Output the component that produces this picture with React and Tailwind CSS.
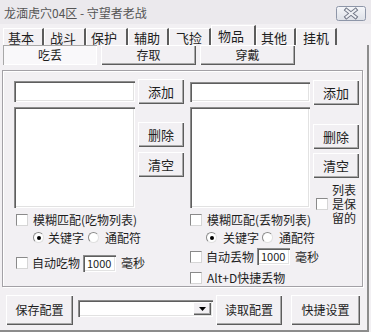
import React from "react";

const raised =
  "bg-[#f2f0f3] shadow-[inset_1px_1px_0_#ffffff,inset_-1px_-1px_0_#5c5c5c,inset_-2px_-2px_0_#a9a9a9]";
const sunken =
  "bg-white shadow-[inset_1px_1px_0_#8c8c8c,inset_2px_2px_0_#5e5e5e,inset_-1px_-1px_0_#ffffff,inset_-2px_-2px_0_#e2e2e2]";

function CloseBtn() {
  return (
    <svg width="30" height="15" viewBox="0 0 30 15" className="self-start mt-[6px]">
      <defs>
        <linearGradient id="cg" x1="0" y1="0" x2="0" y2="1">
          <stop offset="0" stopColor="#f6f7fa" />
          <stop offset="1" stopColor="#dde0e7" />
        </linearGradient>
      </defs>
      <rect x="0.5" y="0.5" width="29" height="14" rx="2" fill="url(#cg)" stroke="#8e96a8" />
      <path d="M10.5 4 L19.5 11 M19.5 4 L10.5 11" stroke="#6f7585" strokeWidth="4" strokeLinecap="square" />
      <path d="M10.5 4 L19.5 11 M19.5 4 L10.5 11" stroke="#eef0f4" strokeWidth="2" strokeLinecap="square" />
    </svg>
  );
}

function Check() {
  return (
    <div className="w-[12px] h-[12px] shrink-0 bg-white border border-t-[#8a8a8a] border-l-[#8a8a8a] border-r-[#d6d6d6] border-b-[#d6d6d6]" />
  );
}

function Radio({ on }) {
  return (
    <div className="w-[11px] h-[11px] shrink-0 rounded-full bg-white border border-t-[#8a8a8a] border-l-[#8a8a8a] border-r-[#e0e0e0] border-b-[#e0e0e0] flex items-center justify-center">
      {on ? <div className="w-[4px] h-[4px] rounded-full bg-black" /> : null}
    </div>
  );
}

function Tab({ label, cls, sel }) {
  if (sel) {
    return (
      <div className={`h-[20px] flex items-start pt-[3px] border-l border-t border-l-white border-t-white border-r-2 border-r-[#5c5c5c] text-[13px] leading-[14px] ${cls}`}>
        {label}
      </div>
    );
  }
  return (
    <div className={`h-[17px] flex items-center border-l border-t border-l-white border-t-white border-r-2 border-r-[#5c5c5c] text-[13px] leading-[14px] pt-[2px] ${cls}`}>
      {label}
    </div>
  );
}

export default function App() {
  return (
    <div className="w-[371px] h-[332px] bg-[#f2f0f3] text-[#1e1e1e] font-['Noto_Sans_CJK_SC',sans-serif] overflow-hidden flex flex-col">
      {/* title bar */}
      <div className="h-[24px] shrink-0 bg-[#ebe9ed] flex items-center justify-between pl-[4px] pr-[5px]">
        <span className="text-[12px] leading-none text-[#555] pt-[2px]">龙湎虎穴04区 - 守望者老战</span>
        <CloseBtn />
      </div>

      {/* tabs */}
      <div className="h-[21px] shrink-0 flex items-end pl-[3px]">
        <Tab label="基本" cls="w-[41px] pl-[4px]" />
        <Tab label="战斗" cls="w-[42px] pl-[5px]" />
        <Tab label="保护" cls="w-[42px] pl-[4px]" />
        <Tab label="辅助" cls="w-[41px] pl-[5px]" />
        <Tab label="飞捡" cls="w-[42px] pl-[6px]" />
        <Tab label="物品" cls="w-[45px] pl-[6px]" sel />
        <Tab label="其他" cls="w-[40px] pl-[4px]" />
        <Tab label="挂机" cls="w-[41px] pl-[6px]" />
      </div>

      {/* tab page */}
      <div className="w-[369px] h-[287px] shrink-0 border-r-2 border-b-2 border-r-[#8c8c8c] border-b-[#8c8c8c] flex flex-col">
        {/* sub tabs */}
        <div className="h-[20px] shrink-0 flex gap-[4px] pl-[3px] text-[12px]">
          <div className="w-[94px] h-[20px] flex items-center justify-center bg-[#f9f8fa] shadow-[inset_1px_1px_0_#a8a8a8,inset_-1px_-1px_0_#ffffff]">
            吃丢
          </div>
          <div className={`w-[95px] h-[20px] flex items-center justify-center ${raised}`}>存取</div>
          <div className={`w-[95px] h-[20px] flex items-center justify-center ${raised}`}>穿戴</div>
        </div>

        {/* group */}
        <div className="mt-[5px] ml-[2px] w-[361px] h-[217px] shrink-0 border border-[#a3a1a6] shadow-[inset_1px_1px_0_#ffffff,1px_1px_0_#ffffff] flex text-[12px]">
          {/* left column */}
          <div className="ml-[11px] w-[170px] flex flex-col">
            <div className="h-[137px] flex gap-[3px]">
              <div className="w-[121px] flex flex-col">
                <div className={`mt-[10px] h-[21px] ${sunken}`} />
                <div className={`mt-[5px] h-[101px] ${sunken}`} />
              </div>
              <div className="w-[46px] flex flex-col text-[13px]">
                <div className={`mt-[8px] h-[25px] flex items-center justify-center ${raised}`}>添加</div>
                <div className={`mt-[18px] h-[25px] flex items-center justify-center ${raised}`}>删除</div>
                <div className={`mt-[5px] h-[25px] flex items-center justify-center ${raised}`}>清空</div>
              </div>
            </div>
            <div className="mt-[4px] h-[15px] flex items-center pl-[2px] gap-[5px] whitespace-nowrap">
              <Check />
              <span>模糊匹配(吃物列表)</span>
            </div>
            <div className="mt-[3px] h-[15px] flex items-center pl-[19px] whitespace-nowrap">
              <Radio on />
              <span className="ml-[4px]">关键字</span>
              <span className="ml-[4px]"><Radio /></span>
              <span className="ml-[6px]">通配符</span>
            </div>
            <div className="mt-[8px] h-[20px] flex items-center pl-[2px] whitespace-nowrap">
              <Check />
              <span className="ml-[4px]">自动吃物</span>
              <div className={`ml-[3px] w-[33px] h-[17px] flex items-center pl-[4px] text-[11px] ${sunken}`}>1000</div>
              <span className="ml-[5px]">毫秒</span>
            </div>
          </div>

          {/* right column */}
          <div className="ml-[6px] w-[169px] flex flex-col">
            <div className="h-[137px] flex gap-[3px]">
              <div className="w-[120px] flex flex-col">
                <div className={`mt-[11px] h-[20px] ${sunken}`} />
                <div className={`mt-[5px] h-[101px] ${sunken}`} />
              </div>
              <div className="w-[46px] flex flex-col text-[13px]">
                <div className={`mt-[9px] h-[25px] shrink-0 flex items-center justify-center ${raised}`}>添加</div>
                <div className={`mt-[19px] h-[25px] shrink-0 flex items-center justify-center ${raised}`}>删除</div>
                <div className={`mt-[4px] h-[25px] shrink-0 flex items-center justify-center ${raised}`}>清空</div>
                <div className="mt-[5px] h-[42px] shrink-0 flex items-center pl-[3px] gap-[4px] text-[12px]">
                  <Check />
                  <div className="w-[25px] leading-[14px] break-all">列表是保留的</div>
                </div>
              </div>
            </div>
            <div className="mt-[4px] h-[16px] flex items-center gap-[5px] whitespace-nowrap">
              <Check />
              <span>模糊匹配(丢物列表)</span>
            </div>
            <div className="mt-[2px] h-[15px] flex items-center pl-[16px] whitespace-nowrap">
              <Radio on />
              <span className="ml-[6px]">关键字</span>
              <span className="ml-[3px]"><Radio /></span>
              <span className="ml-[6px]">通配符</span>
            </div>
            <div className="mt-[3px] h-[17px] flex items-center whitespace-nowrap">
              <Check />
              <span className="ml-[4px]">自动丢物</span>
              <div className={`ml-[3px] w-[33px] h-[17px] flex items-center pl-[4px] text-[11px] ${sunken}`}>1000</div>
              <span className="ml-[5px]">毫秒</span>
            </div>
            <div className="mt-[5px] h-[16px] flex items-center gap-[5px] whitespace-nowrap">
              <Check />
              <span>Alt+D快捷丢物</span>
            </div>
          </div>
        </div>

        {/* bottom bar */}
        <div className="mt-[8px] flex items-start text-[12px]">
          <div className={`ml-[6px] w-[67px] h-[30px] flex items-center justify-center ${raised}`}>保存配置</div>
          <div className={`ml-[5px] mt-[5px] w-[135px] h-[17px] flex items-center justify-end pr-[2px] ${sunken}`}>
            <div className={`w-[18px] h-[13px] flex items-center justify-center ${raised}`}>
              <svg width="7" height="4" viewBox="0 0 7 4">
                <path d="M0 0 H7 L3.5 4 Z" fill="#000" />
              </svg>
            </div>
          </div>
          <div className={`ml-[3px] w-[66px] h-[30px] flex items-center justify-center ${raised}`}>读取配置</div>
          <div className={`ml-[9px] w-[69px] h-[30px] flex items-center justify-center ${raised}`}>快捷设置</div>
        </div>
      </div>
    </div>
  );
}
